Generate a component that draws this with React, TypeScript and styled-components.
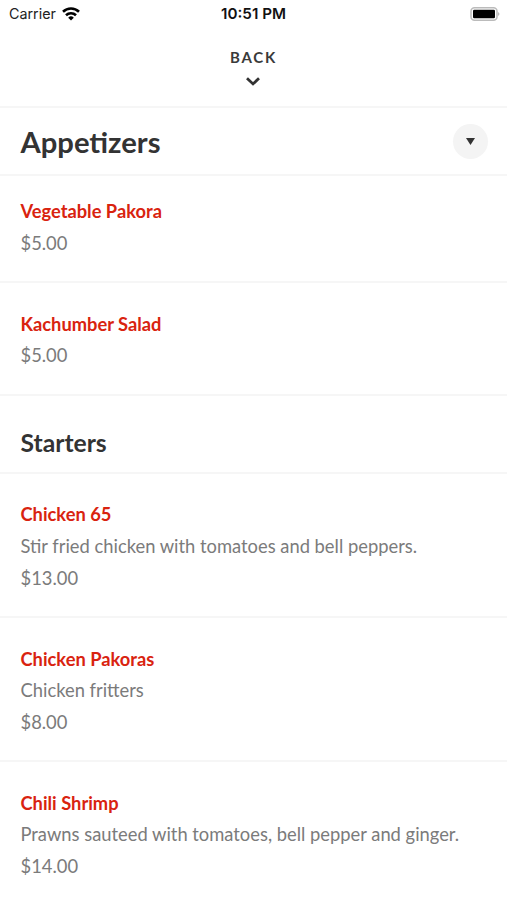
import React from "react";
import styled, { createGlobalStyle } from "styled-components";

const Global = createGlobalStyle`
  *{box-sizing:border-box}
  body{margin:0;background:#fff;font-family:Lato,sans-serif;color:#333;overflow:hidden}
`;
const Page = styled.main`width:507px;height:900px;overflow:hidden;display:flex;flex-direction:column;background:#fff;`;
const Status = styled.div`height:28px;display:grid;grid-template-columns:1fr auto 1fr;align-items:center;padding:0 7px 1px 9px;font:15px/27px Inter,sans-serif;color:#111;flex:none;`;
const Carrier = styled.span`display:flex;align-items:center;gap:6px;font-size:14.3px;color:#222;`;
const Time = styled.span`font-weight:600;font-size:15.2px;margin-right:2px;`;
const Battery = styled.svg`justify-self:end;`;
const Back = styled.button`height:80px;border:0;border-bottom:2px solid #f6f6f6;background:none;padding:20px 2px 0 0;display:flex;flex-direction:column;align-items:center;font:700 15px/18px Lato,sans-serif;letter-spacing:1.75px;color:#3a3a3a;gap:11px;flex:none;`;
const BackLabel = styled.span`margin-right:-2px;`;
const Header = styled.header`height:68px;border-bottom:2px solid #f6f6f6;padding:1px 19px 0 20.5px;display:flex;align-items:center;justify-content:space-between;flex:none;`;
const Title = styled.h1`margin:0;font:700 29.2px/36px Lato,sans-serif;`;
const Toggle = styled.button`width:35px;height:35px;border:0;border-radius:50%;background:#f4f4f4;display:grid;place-items:center;padding:0;`;
const Section = styled.h2`height:78px;margin:0;padding:32px 20.5px 0;border-bottom:2px solid #f6f6f6;font:700 24.7px/30px Lato,sans-serif;flex:none;`;
const Item = styled.article<{ $h: number; $top: number }>`height:${p => p.$h}px;padding:${p => p.$top}px 20.5px 0;border-bottom:2px solid #f6f6f6;font-size:18.35px;line-height:31.7px;color:#7b7b7b;flex:none;`;
const Name = styled.h3`margin:0;font:700 18.3px/31.7px Lato,sans-serif;color:#d9230f;`;
const Line = styled.p`margin:0;`;

type Dish = { name: string; note?: string; price: string; h: number; top: number };
const Row = ({ name, note, price, h, top }: Dish) => (
  <Item $h={h} $top={top}><Name>{name}</Name>{note && <Line>{note}</Line>}<Line>{price}</Line></Item>
);

export default function App() {
  return <><Global /><Page>
    <Status>
      <Carrier>Carrier
        <svg width="18" height="14" viewBox="0 0 18 14" fill="none" stroke="#000" strokeWidth="2.6"><path d="M1 4.8a11.5 11.5 0 0 1 16 0M4 8.2a7.2 7.2 0 0 1 10 0" /><path d="M9 13.5 6.2 10.7a4 4 0 0 1 5.6 0z" fill="#000" stroke="none" /></svg>
      </Carrier>
      <Time>10:51 PM</Time>
      <Battery width="30" height="14" viewBox="0 0 30 14"><rect x="1" y=".8" width="26" height="12.4" rx="3.5" fill="none" stroke="#bbb" strokeWidth="1.5" /><rect x="3" y="2.7" width="22" height="8.6" rx="1.2" /><path d="M28 5q3 2 0 4z" fill="#bbb" /></Battery>
    </Status>
    <Back><BackLabel>BACK</BackLabel><svg width="14" height="9" viewBox="0 0 14 9" fill="none" stroke="#333" strokeWidth="2.8"><path d="m1 1.3 6 5.6 6-5.6" /></svg></Back>
    <Header><Title>Appetizers</Title><Toggle aria-label="Choose section"><svg width="9" height="7"><path d="M0 0h9L4.5 7z" fill="#333" /></svg></Toggle></Header>
    <Row name="Vegetable Pakora" price="$5.00" h={107} top={20} />
    <Row name="Kachumber Salad" price="$5.00" h={113} top={25.6} />
    <Section>Starters</Section>
    <Row name="Chicken 65" note="Stir fried chicken with tomatoes and bell peppers." price="$13.00" h={144} top={25.4} />
    <Row name="Chicken Pakoras" note="Chicken fritters" price="$8.00" h={144} top={25.6} />
    <Row name="Chili Shrimp" note="Prawns sauteed with tomatoes, bell pepper and ginger." price="$14.00" h={150} top={25.6} />
  </Page></>;
}
